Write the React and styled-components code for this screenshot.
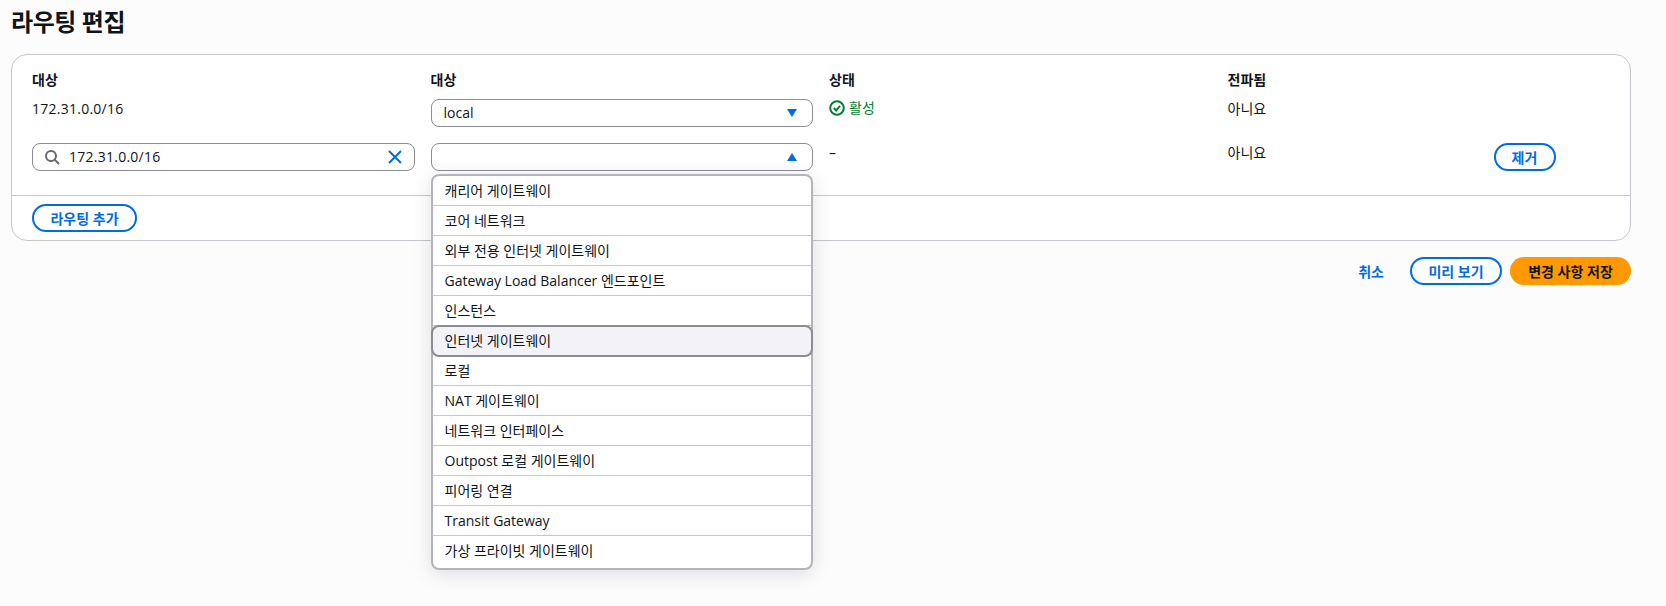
import React from 'react';
import styled, { createGlobalStyle } from 'styled-components';

const GlobalStyle = createGlobalStyle`
  html, body {
    margin: 0;
    padding: 0;
    background: #fcfcfd;
    color: #0f141a;
    font-family: "Open Sans", "Noto Sans CJK KR", sans-serif;
    font-size: 14px;
    line-height: 20px;
  }
  * { box-sizing: border-box; }
`;

const Page = styled.div`
  width: 1666px;
  height: 606px;
  padding: 6px 35px 0 11px;
  overflow: hidden;
`;

const Title = styled.h1`
  margin: 0;
  height: 48px;
  font-size: 24px;
  line-height: 32px;
  font-weight: 700;
  letter-spacing: -0.4px;
`;

const Panel = styled.section`
  border: 1px solid #c6c6cd;
  border-radius: 16px;
  background: #fff;
  height: 187px;
`;

const PanelBody = styled.div`
  height: 141px;
  padding: 15px 20px 0;
  border-bottom: 1px solid #c6c6cd;
`;

const Row = styled.div`
  display: grid;
  grid-template-columns: 382.5px 382.5px 382.5px 250px 62px;
  column-gap: 16px;
  margin-bottom: ${p => p.$gap || 0}px;
  height: ${p => p.$height}px;
`;

const HeadCell = styled.div`
  font-weight: 700;
  font-size: 14px;
`;

const TextCell = styled.div`
  font-size: 14px;
`;

const CidrText = styled(TextCell)`
  letter-spacing: 0.25px;
`;

const StatusCell = styled(TextCell)`
  display: flex;
  align-items: flex-start;
  gap: 4px;
  margin-top: -1px;
  color: #00802f;
  svg { margin-top: 2px; flex: none; }
`;

const SearchBox = styled.div`
  display: flex;
  align-items: center;
  height: 28px;
  padding: 0 11px;
  gap: 9px;
  border: 1px solid #8c8c94;
  border-radius: 8px;
  background: #fff;
  font-size: 14px;
`;

const SearchText = styled.span`
  flex: 1;
  letter-spacing: 0.25px;
`;

const SelectWrap = styled.div`
  position: relative;
`;

const SelectBox = styled.div`
  display: flex;
  align-items: center;
  justify-content: space-between;
  height: 28px;
  padding: 0 14px 0 12px;
  border: 1px solid #8c8c94;
  border-radius: 8px;
  background: #fff;
  font-size: 14px;
`;

const Menu = styled.ul`
  position: absolute;
  top: 31px;
  left: 0;
  right: 0;
  margin: 0;
  padding: 0;
  list-style: none;
  background: #fff;
  border: 2px solid #b4b4bb;
  border-radius: 8px;
  box-shadow: 0 4px 20px rgba(0, 7, 22, 0.12);
  z-index: 5;
`;

const MenuItem = styled.li`
  position: relative;
  height: ${p => (p.$last ? 32 : 30)}px;
  padding: ${p => (p.$last ? '0 12px 2px' : '0 12px')};
  display: flex;
  align-items: center;
  font-size: 14px;
  border-bottom: ${p => (p.$last ? 'none' : '1px solid #c6c6cd')};
  ${p => p.$active && `
    margin: -1px -2px;
    height: 32px;
    padding: 0 12px;
    background: #f3f3f7;
    border: 2px solid #8c8c94;
    border-radius: 8px;
    z-index: 1;
  `}
`;

const PanelFooter = styled.div`
  padding: 8px 20px;
`;

const OutlineButton = styled.button`
  display: inline-flex;
  align-items: center;
  justify-content: center;
  height: 28px;
  width: ${p => p.$width}px;
  padding: 0;
  border: 2px solid #006ce0;
  border-radius: 20px;
  background: #fff;
  color: #006ce0;
  font-family: inherit;
  font-size: 14px;
  font-weight: 700;
`;

const Actions = styled.div`
  display: flex;
  justify-content: flex-end;
  align-items: center;
  margin-top: 16px;
  gap: 8px;
`;

const TextButton = styled.button`
  border: 0;
  background: none;
  padding: 0;
  margin-right: 18px;
  color: #006ce0;
  font-family: inherit;
  font-size: 14px;
  font-weight: 700;
`;

const PrimaryButton = styled.button`
  height: 28px;
  width: 121px;
  padding: 0;
  border: 0;
  border-radius: 20px;
  background: #ff9900;
  color: #0f141a;
  font-family: inherit;
  font-size: 14px;
  font-weight: 700;
`;

const SearchIcon = () => (
  <svg width="16" height="16" viewBox="0 0 16 16" fill="none" stroke="#656871" strokeWidth="2">
    <circle cx="7" cy="7" r="5" />
    <path d="M10.6 10.6 15 15" />
  </svg>
);

const ClearIcon = () => (
  <svg width="16" height="16" viewBox="0 0 16 16" fill="none" stroke="#006ce0" strokeWidth="2">
    <path d="m2 2 12 12M14 2 2 14" />
  </svg>
);

const Caret = ({ up }) => (
  <svg width="12" height="10" viewBox="0 0 12 10" fill="#006ce0">
    <path d={up ? 'M6 1 11 9H1z' : 'M1 1h10L6 9z'} />
  </svg>
);

const CheckIcon = () => (
  <svg width="16" height="16" viewBox="0 0 16 16" fill="none" stroke="#00802f" strokeWidth="2">
    <circle cx="8" cy="8" r="6.8" />
    <path d="m4.8 8 2.3 2.4 4-4.6" />
  </svg>
);

const options = [
  '캐리어 게이트웨이',
  '코어 네트워크',
  '외부 전용 인터넷 게이트웨이',
  'Gateway Load Balancer 엔드포인트',
  '인스턴스',
  '인터넷 게이트웨이',
  '로컬',
  'NAT 게이트웨이',
  '네트워크 인터페이스',
  'Outpost 로컬 게이트웨이',
  '피어링 연결',
  'Transit Gateway',
  '가상 프라이빗 게이트웨이',
];

export default function App() {
  return (
    <Page>
      <GlobalStyle />
      <Title>라우팅 편집</Title>
      <Panel>
        <PanelBody>
          <Row $height={29}>
            <HeadCell>대상</HeadCell>
            <HeadCell>대상</HeadCell>
            <HeadCell>상태</HeadCell>
            <HeadCell>전파됨</HeadCell>
            <div />
          </Row>
          <Row $height={28} $gap={16}>
            <CidrText>172.31.0.0/16</CidrText>
            <SelectBox>
              <span>local</span>
              <Caret />
            </SelectBox>
            <StatusCell><CheckIcon />활성</StatusCell>
            <TextCell>아니요</TextCell>
            <div />
          </Row>
          <Row $height={28}>
            <SearchBox>
              <SearchIcon />
              <SearchText>172.31.0.0/16</SearchText>
              <ClearIcon />
            </SearchBox>
            <SelectWrap>
              <SelectBox>
                <span />
                <Caret up />
              </SelectBox>
              <Menu>
                {options.map((o, i) => (
                  <MenuItem key={o} $active={i === 5} $last={i === options.length - 1}>{o}</MenuItem>
                ))}
              </Menu>
            </SelectWrap>
            <TextCell>–</TextCell>
            <TextCell>아니요</TextCell>
            <OutlineButton $width={62}>제거</OutlineButton>
          </Row>
        </PanelBody>
        <PanelFooter>
          <OutlineButton $width={105}>라우팅 추가</OutlineButton>
        </PanelFooter>
      </Panel>
      <Actions>
        <TextButton>취소</TextButton>
        <OutlineButton $width={92}>미리 보기</OutlineButton>
        <PrimaryButton>변경 사항 저장</PrimaryButton>
      </Actions>
    </Page>
  );
}
